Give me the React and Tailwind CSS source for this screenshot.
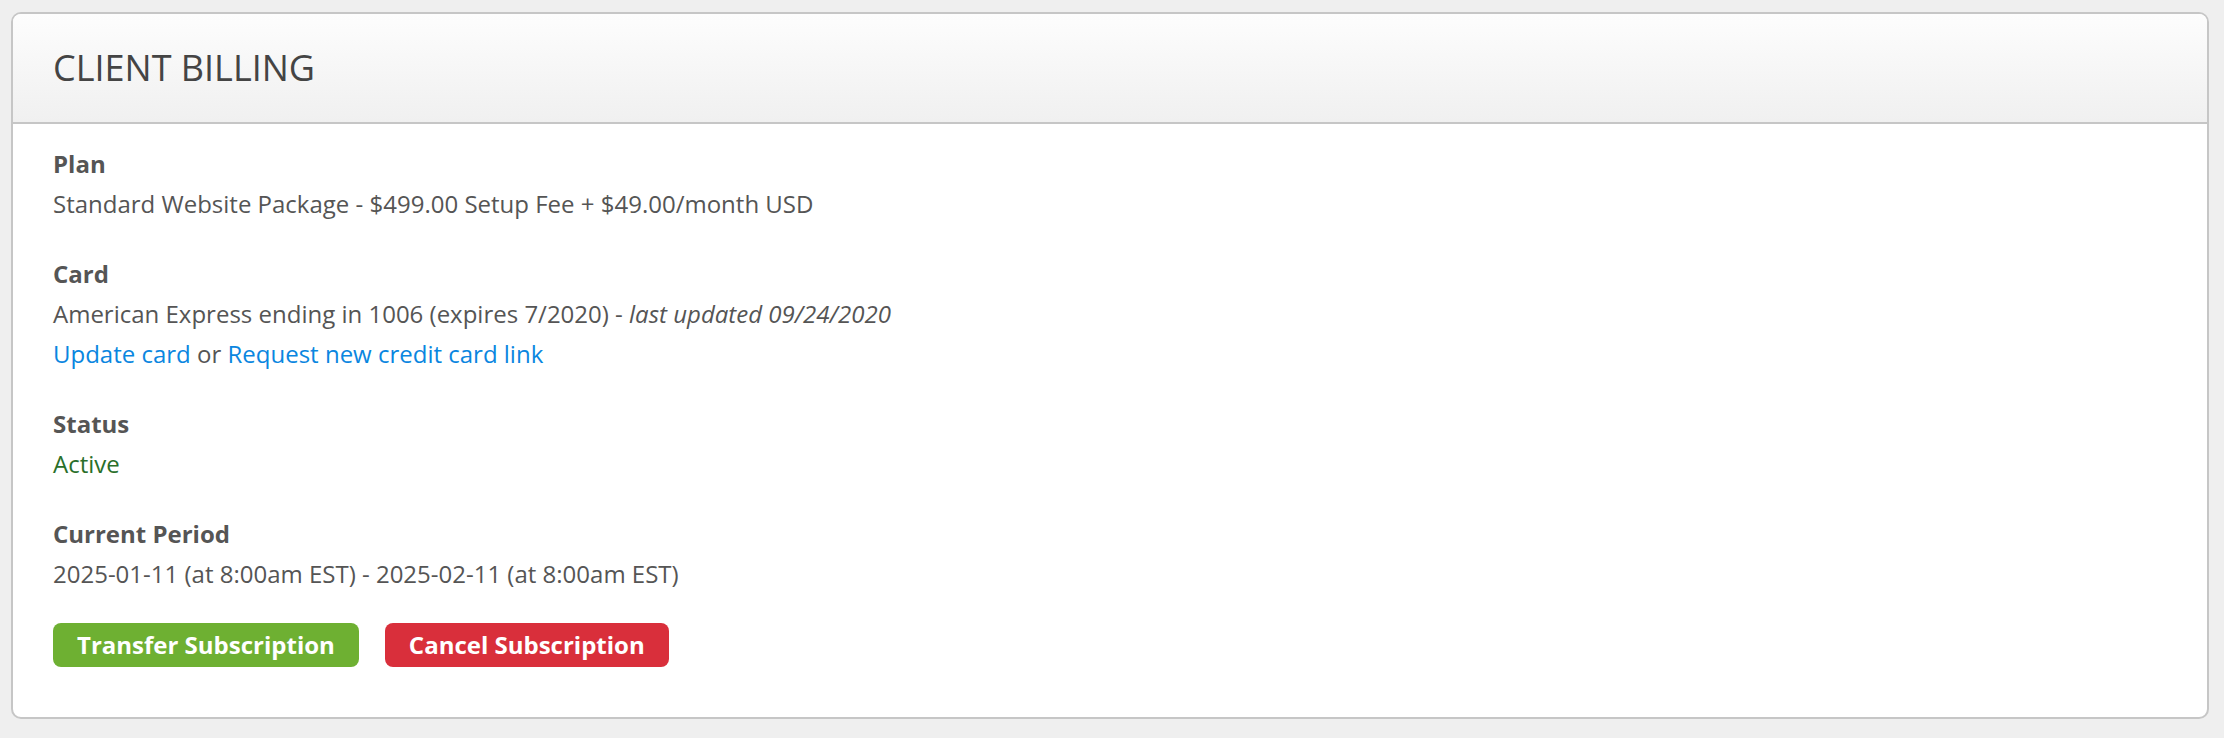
import React from 'react';

const Field = ({ label, children }) => (
    <div className="mb-[30px]">
        <div className="font-bold text-[24px] leading-[40px] text-[#555]">{label}</div>
        {children}
    </div>
);

const App = () => {
    return (
        <div
            className="min-h-[738px] w-full bg-[#efefef] pl-[11px] pr-[15px] pt-[12px] pb-[20px]"
            style={{ fontFamily: '"Open Sans", "Liberation Sans", sans-serif' }}
        >
            <div className="rounded-[10px] border-2 border-[#c6c6c6] bg-white overflow-hidden">
                <div className="h-[110px] flex items-center pl-[40px] bg-gradient-to-b from-[#fdfdfd] to-[#f0f0f0] border-b-2 border-[#c6c6c6]">
                    <h1 className="text-[36px] text-[#444] font-normal">CLIENT BILLING</h1>
                </div>

                <div className="pl-[40px] pt-[20px] pb-[50px] text-[24px] leading-[40px] text-[#555]">
                    <Field label="Plan">
                        <div>Standard Website Package - $499.00 Setup Fee + $49.00/month USD</div>
                    </Field>

                    <Field label="Card">
                        <div>
                            American Express ending in 1006 (expires 7/2020) - <em>last updated 09/24/2020</em>
                        </div>
                        <div>
                            <a href="#" className="text-[#0a86e0]">Update card</a> or{' '}
                            <a href="#" className="text-[#0a86e0]">Request new credit card link</a>
                        </div>
                    </Field>

                    <Field label="Status">
                        <div className="text-[#2a6f2a]">Active</div>
                    </Field>

                    <div className="mb-[29px]">
                        <div className="font-bold text-[24px] leading-[40px] text-[#555]">Current Period</div>
                        <div>2025-01-11 (at 8:00am EST) - 2025-02-11 (at 8:00am EST)</div>
                    </div>

                    <div className="flex gap-[26px]">
                        <button className="h-[44px] px-[24px] rounded-[8px] bg-[#6eb032] text-white font-bold text-[24px] leading-none">
                            Transfer Subscription
                        </button>
                        <button className="h-[44px] px-[24px] rounded-[8px] bg-[#d92f3b] text-white font-bold text-[24px] leading-none">
                            Cancel Subscription
                        </button>
                    </div>
                </div>
            </div>
        </div>
    );
};

export default App;
